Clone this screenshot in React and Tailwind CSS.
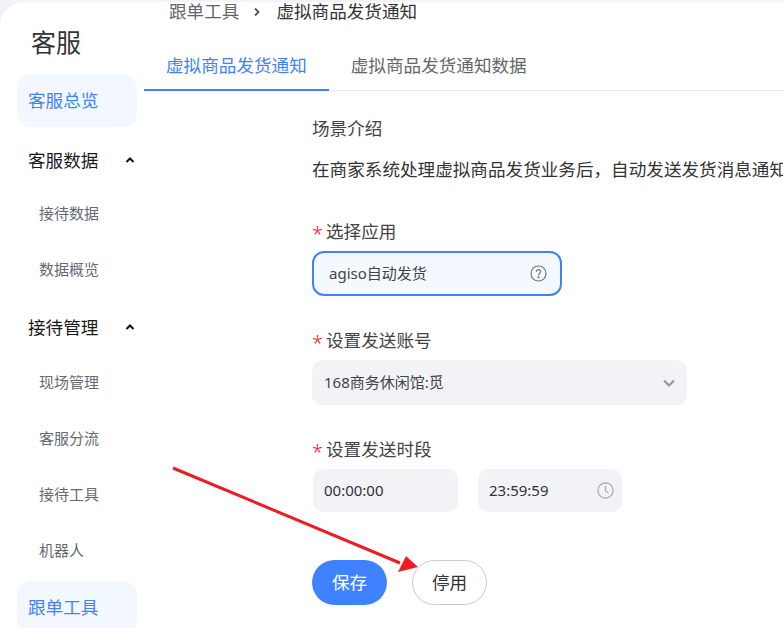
import React from "react";

const font = { fontFamily: '"Noto Sans", "Noto Sans CJK SC", sans-serif' };

function Up() {
  return (
    <svg width="12" height="12" viewBox="0 0 12 12" className="-mr-[1px]">
      <path d="M2.5 8 L6 4.5 L9.5 8" fill="none" stroke="#111" strokeWidth="2" />
    </svg>
  );
}

function Active({ children, className = "" }) {
  return (
    <div className={`h-[53px] w-[120px] shrink-0 rounded-[14px] bg-[#f3f7ff] pl-[11px] flex items-center text-[17.6px] text-[#3f82ff] ${className}`}>
      {children}
    </div>
  );
}

function Group({ children, className = "" }) {
  return (
    <div className={`h-[50px] w-[120px] shrink-0 pl-[11px] pr-[2px] flex items-center justify-between text-[17.6px] text-[#1a1a1a] ${className}`}>
      <span>{children}</span>
      <Up />
    </div>
  );
}

function Sub({ children }) {
  return (
    <div className="h-[56px] w-[120px] shrink-0 pl-[22px] flex items-center text-[15px] text-[#666a73]">
      {children}
    </div>
  );
}

function Label({ children }) {
  return (
    <div className="flex h-[24px] items-center text-[17.6px] text-[#444]">
      <span className="w-[14px] pt-[6px] text-[20px] font-light leading-none text-[#f5222d]">*</span>
      {children}
    </div>
  );
}

export default function App() {
  return (
    <div style={font} className="relative h-[628px] w-[783px] overflow-hidden bg-[#f2f3f8] pt-[2px]">
      <div className="flex h-[626px] rounded-tl-[24px] bg-white">
        <aside className="w-[144px] shrink-0 overflow-hidden pl-[17px]">
          <div className="h-[72px] pl-[14px] pt-[22px] text-[25px] leading-[36px] text-[#333]">客服</div>
          <Active>客服总览</Active>
          <Group className="mt-[8px]">客服数据</Group>
          <Sub>接待数据</Sub>
          <Sub>数据概览</Sub>
          <Group className="mt-[5px] mb-[2px]">接待管理</Group>
          <Sub>现场管理</Sub>
          <Sub>客服分流</Sub>
          <Sub>接待工具</Sub>
          <Sub>机器人</Sub>
          <Active className="mt-[3px]">跟单工具</Active>
        </aside>
        <main className="min-w-0 flex-1">
          <div className="flex h-[20px] items-center pl-[25px] text-[17.6px] leading-none">
            <span className="text-[#666]">跟单工具</span>
            <svg width="10" height="10" viewBox="0 0 10 10" className="ml-[13px] mr-[14px]">
              <path d="M3 1.5 L6.5 5 L3 8.5" fill="none" stroke="#555" strokeWidth="1.8" />
            </svg>
            <span className="text-[#333]">虚拟商品发货通知</span>
          </div>
          <div className="flex h-[69px] border-b border-[#e8e9ee] text-[17.6px]">
            <div className="flex h-[69px] items-center border-b-2 border-[#3f82ff] px-[22px] pt-[19px] text-[#3f82ff]">虚拟商品发货通知</div>
            <div className="flex h-[68px] items-center px-[22px] pt-[19px] text-[#666]">虚拟商品发货通知数据</div>
          </div>
          <div className="pl-[168px]">
            <div className="mt-[25px] h-[24px] text-[17.6px] leading-[24px] text-[#444]">场景介绍</div>
            <div className="mt-[16px] h-[26px] w-[471px] whitespace-nowrap text-[17.6px] leading-[26px] text-[#333]">
              在商家系统处理虚拟商品发货业务后，自动发送发货消息通知买家
            </div>
            <div className="mt-[37px]"><Label>选择应用</Label></div>
            <div className="mt-[8px] flex h-[45px] w-[250px] items-center justify-between rounded-[12px] border-2 border-[#3f82ff] bg-[#f4f8ff] pl-[15px] pr-[13px] text-[15px] text-[#444]">
              <span>agiso自动发货</span>
              <svg width="17" height="17" viewBox="0 0 17 17" fill="none" stroke="#777" strokeWidth="1.2">
                <circle cx="8.5" cy="8.5" r="7.5" />
                <path d="M6.4 6.8 C6.4 4 10.6 4 10.6 6.7 C10.6 8.3 8.5 8.3 8.5 10.2" />
                <circle cx="8.5" cy="12.3" r="0.5" fill="#777" />
              </svg>
            </div>
            <div className="mt-[32px]"><Label>设置发送账号</Label></div>
            <div className="mt-[8px] flex h-[45px] w-[375px] items-center justify-between rounded-[10px] bg-[#f2f3f7] pl-[12px] pr-[12px] text-[15px] text-[#444]">
              <span>168商务休闲馆:觅</span>
              <svg width="12" height="10" viewBox="0 0 12 10">
                <path d="M1 2.5 L6 7.5 L11 2.5" fill="none" stroke="#999" strokeWidth="2.2" />
              </svg>
            </div>
            <div className="mt-[32px]"><Label>设置发送时段</Label></div>
            <div className="mt-[8px] flex gap-[20px] pl-[1px] text-[15px] text-[#333]">
              <div className="flex h-[43px] w-[145px] items-center rounded-[10px] bg-[#f2f3f7] pl-[11px]">00:00:00</div>
              <div className="flex h-[43px] w-[144px] items-center justify-between rounded-[10px] bg-[#f2f3f7] pl-[11px] pr-[8px]">
                <span>23:59:59</span>
                <svg width="17" height="17" viewBox="0 0 17 17" fill="none" stroke="#aaa" strokeWidth="1.3">
                  <circle cx="8.5" cy="8.5" r="7.6" />
                  <path d="M8.5 4 V9 L11.5 11" />
                </svg>
              </div>
            </div>
            <div className="mt-[48px] flex gap-[25px] text-[17.6px]">
              <button className="h-[45px] w-[75px] rounded-full bg-[#3f82ff] text-white">保存</button>
              <button className="h-[45px] w-[75px] rounded-full border border-[#c9cad3] bg-white text-[#333]">停用</button>
            </div>
          </div>
        </main>
      </div>
      <svg className="pointer-events-none absolute left-0 top-0" width="783" height="628" viewBox="0 0 783 628">
        <line x1="173" y1="468" x2="400" y2="563" stroke="#ed1c24" strokeWidth="3" />
        <polygon points="418,567 398,572 406,556" fill="#ed1c24" />
      </svg>
    </div>
  );
}
